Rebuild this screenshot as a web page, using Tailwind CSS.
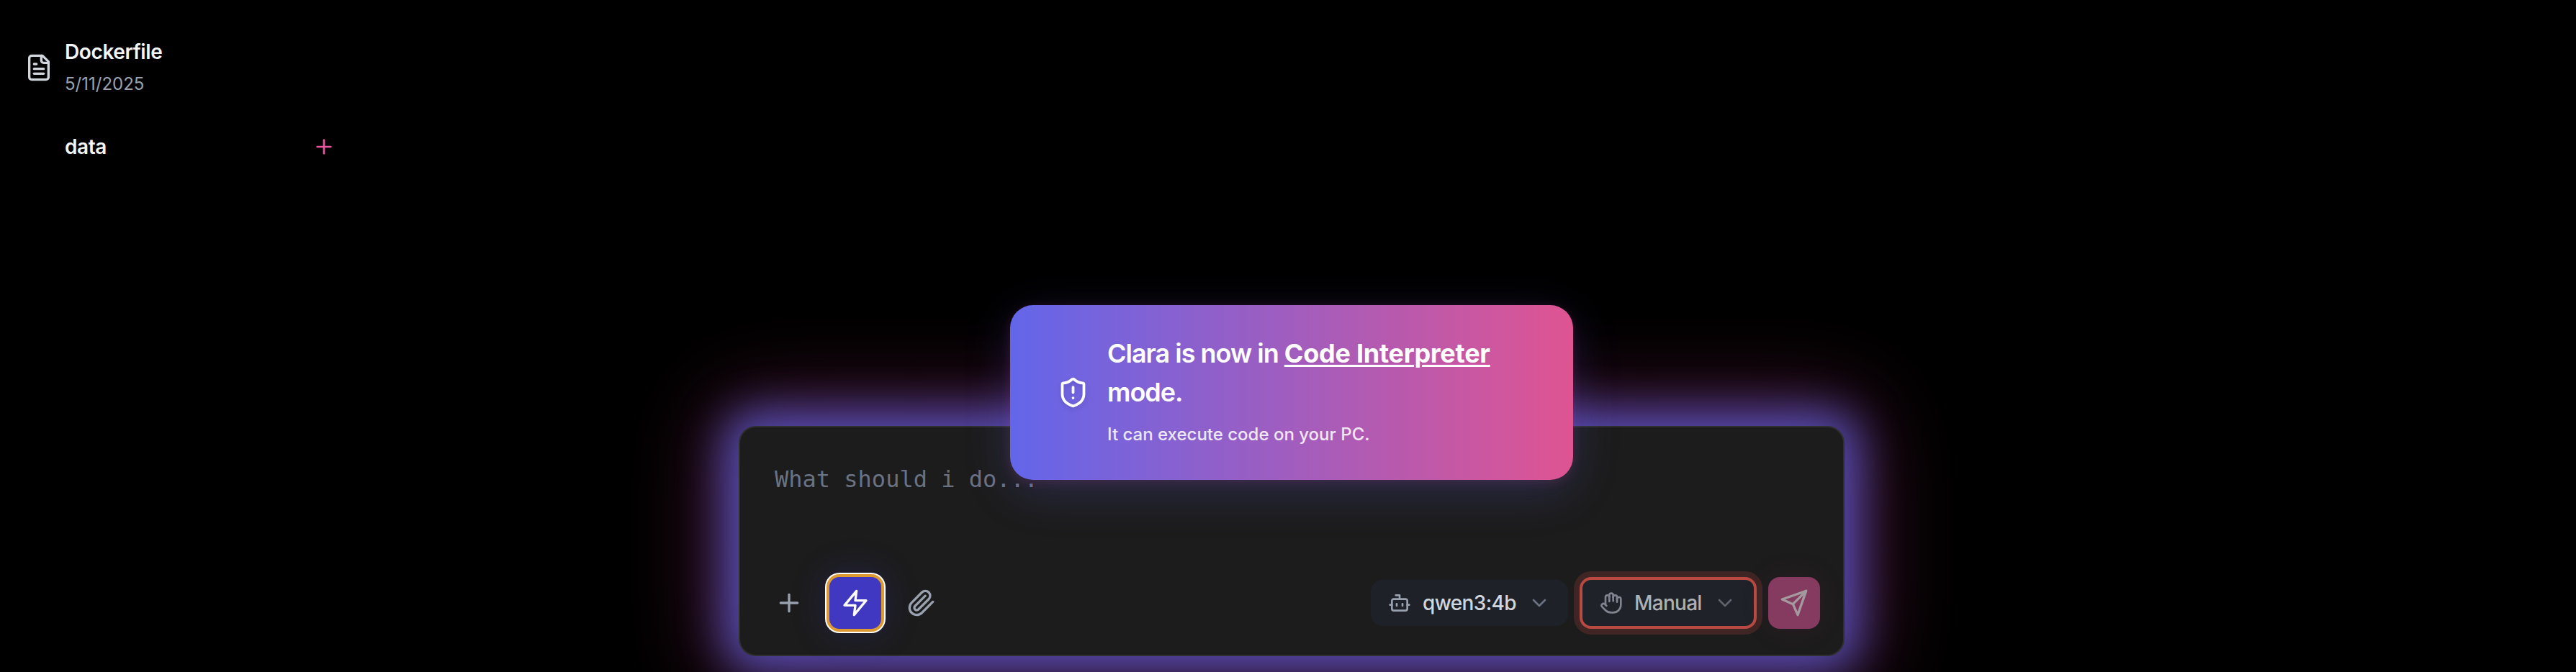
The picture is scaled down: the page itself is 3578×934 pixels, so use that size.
<!DOCTYPE html>
<html lang="en">
<head>
<meta charset="utf-8">
<title>Clara</title>
<script src="https://cdn.jsdelivr.net/npm/@tailwindcss/browser@4"></script>
</head>
<body class="relative flex h-[934px] w-[3578px] flex-col overflow-hidden bg-black font-['Inter',sans-serif]">

<!-- File list -->
<ul class="flex h-[592px] w-[466px] shrink-0 flex-col pt-[50px] pl-[34px]">
  <li class="flex h-[88px] items-center gap-4">
    <svg class="size-10 text-gray-300" viewBox="0 0 24 24" fill="none" stroke="currentColor" stroke-width="2" stroke-linecap="round" stroke-linejoin="round"><path d="M15 2H6a2 2 0 0 0-2 2v16a2 2 0 0 0 2 2h12a2 2 0 0 0 2-2V7Z"/><path d="M14 2v4a2 2 0 0 0 2 2h4"/><path d="M10 9H8"/><path d="M16 13H8"/><path d="M16 17H8"/></svg>
    <div class="flex flex-col gap-[3px]">
      <p class="pt-[2px] text-[28px] leading-10 font-semibold tracking-[-0.4px] text-gray-100">Dockerfile</p>
      <p class="text-[24px] leading-[44px] text-gray-400">5/11/2025</p>
    </div>
  </li>
  <li class="mt-[46px] flex h-10 items-center justify-between pl-14">
    <p class="text-[28px] leading-10 font-semibold tracking-[-0.4px] text-gray-100">data</p>
    <svg class="size-8 text-[#e8559f]" viewBox="0 0 24 24" fill="none" stroke="currentColor" stroke-width="2" stroke-linecap="round"><path d="M5 12h14"/><path d="M12 5v14"/></svg>
  </li>
</ul>

<!-- Prompt box -->
<main class="ml-[1026px] flex h-[320px] w-[1536px] shrink-0 flex-col justify-between rounded-3xl border-2 border-[#2f2f2f] bg-[#1c1c1c] px-8 pt-12 pb-9 shadow-[0_0_60px_20px_rgba(99,102,241,0.7),0_0_120px_40px_rgba(236,72,153,0.3)]">
  <p class="px-4 font-['DejaVu_Sans_Mono',monospace] text-[32px] leading-12 text-gray-500">What should i do...</p>
  <div class="flex items-center justify-between">
    <div class="flex items-center gap-5">
      <button class="p-4 text-gray-400">
        <svg class="size-10" viewBox="0 0 24 24" fill="none" stroke="currentColor" stroke-width="2" stroke-linecap="round"><path d="M5 12h14"/><path d="M12 5v14"/></svg>
      </button>
      <button class="rounded-[14px] bg-[#4138c2] p-4 text-white shadow-[0_0_0_4px_#dd9a32,0_0_0_6px_#ffffff,0_0_48px_8px_rgba(67,56,202,0.2)]">
        <svg class="size-10" viewBox="0 0 24 24" fill="none" stroke="currentColor" stroke-width="2" stroke-linecap="round" stroke-linejoin="round"><path d="M13 2 3 14h9l-1 8 10-12h-9l1-8z"/></svg>
      </button>
      <button class="p-4 text-gray-400">
        <svg class="size-10" viewBox="0 0 24 24" fill="none" stroke="currentColor" stroke-width="2" stroke-linecap="round" stroke-linejoin="round"><path d="m21.44 11.05-9.19 9.19a6 6 0 0 1-8.49-8.49l8.57-8.57A4 4 0 1 1 18 8.84l-8.59 8.57a2 2 0 0 1-2.83-2.83l8.49-8.48"/></svg>
      </button>
    </div>
    <div class="flex items-center gap-5">
      <button class="flex h-16 items-center gap-4 rounded-2xl bg-[#1e2128] px-6 text-gray-400">
        <svg class="size-8" viewBox="0 0 24 24" fill="none" stroke="currentColor" stroke-width="2" stroke-linecap="round" stroke-linejoin="round"><path d="M12 8V4H8"/><rect width="16" height="12" x="4" y="8" rx="2"/><path d="M2 14h2"/><path d="M20 14h2"/><path d="M15 13v2"/><path d="M9 13v2"/></svg>
        <span class="w-[130px] text-left text-[28px] leading-10 font-medium tracking-[-0.65px] whitespace-nowrap text-gray-300">qwen3:4b</span>
        <svg class="size-8 text-gray-500" viewBox="0 0 24 24" fill="none" stroke="currentColor" stroke-width="2" stroke-linecap="round" stroke-linejoin="round"><path d="m6 9 6 6 6-6"/></svg>
      </button>
      <button class="flex h-16 items-center gap-4 rounded-xl bg-[#1f2229] px-6 text-[#80848e] shadow-[0_0_0_4px_#b84a42,0_0_0_12px_#3f2524]">
        <svg class="size-8" viewBox="0 0 24 24" fill="none" stroke="currentColor" stroke-width="2" stroke-linecap="round" stroke-linejoin="round"><path d="M18 11V6a2 2 0 0 0-2-2a2 2 0 0 0-2 2"/><path d="M14 10V4a2 2 0 0 0-2-2a2 2 0 0 0-2 2v2"/><path d="M10 10.5V6a2 2 0 0 0-2-2a2 2 0 0 0-2 2v8"/><path d="M18 8a2 2 0 1 1 4 0v6a8 8 0 0 1-8 8h-2c-2.8 0-4.5-.86-5.99-2.34l-3.6-3.6a2 2 0 0 1 2.83-2.82L7 15"/></svg>
        <span class="w-[94px] text-left text-[28px] leading-10 font-medium tracking-[-0.75px] whitespace-nowrap text-[#aeb0b4]">Manual</span>
        <svg class="size-8 text-[#5c616c]" viewBox="0 0 24 24" fill="none" stroke="currentColor" stroke-width="2" stroke-linecap="round" stroke-linejoin="round"><path d="m6 9 6 6 6-6"/></svg>
      </button>
      <button class="rounded-2xl bg-[#853a5f] p-4 text-[#a3999e] shadow-[0_0_48px_rgba(236,72,153,0.07)]">
        <svg class="size-10" viewBox="0 0 24 24" fill="none" stroke="currentColor" stroke-width="2" stroke-linecap="round" stroke-linejoin="round"><path d="m22 2-7 20-4-9-9-4Z"/><path d="M22 2 11 13"/></svg>
      </button>
    </div>
  </div>
</main>

<!-- Mode toast floating over the prompt box -->
<div role="status" class="absolute top-[424px] left-[1403px] flex h-[243px] w-[782px] items-center gap-[25px] rounded-[32px] bg-[linear-gradient(90deg,#6366ea,#df5492)] pl-[65px] text-white shadow-[0_16px_64px_rgba(99,102,241,0.22),0_3px_16px_rgba(236,72,153,0.16)]">
  <svg class="size-[45px] shrink-0 drop-shadow-md" viewBox="0 0 24 24" fill="none" stroke="currentColor" stroke-width="2" stroke-linecap="round" stroke-linejoin="round"><path d="M20 13c0 5-3.5 7.5-7.66 8.95a1 1 0 0 1-.67-.01C7.5 20.5 4 18 4 13V6a1 1 0 0 1 1-1c2 0 4.5-1.2 6.24-2.72a1.17 1.17 0 0 1 1.52 0C14.51 3.81 17 5 19 5a1 1 0 0 1 1 1z"/><path d="M12 8v4"/><path d="M12 16h.01"/></svg>
  <div class="pb-[5px]">
    <p class="w-[560px] text-[36px] leading-[54px] font-semibold tracking-[-1px]">Clara is now in <span class="font-bold tracking-[-0.25px] underline decoration-[3px] underline-offset-[3px]">Code Interpreter</span> mode.</p>
    <p class="mt-[14px] text-[24px] leading-9 font-medium text-white/85">It can execute code on your PC.</p>
  </div>
</div>
</body>
</html>
